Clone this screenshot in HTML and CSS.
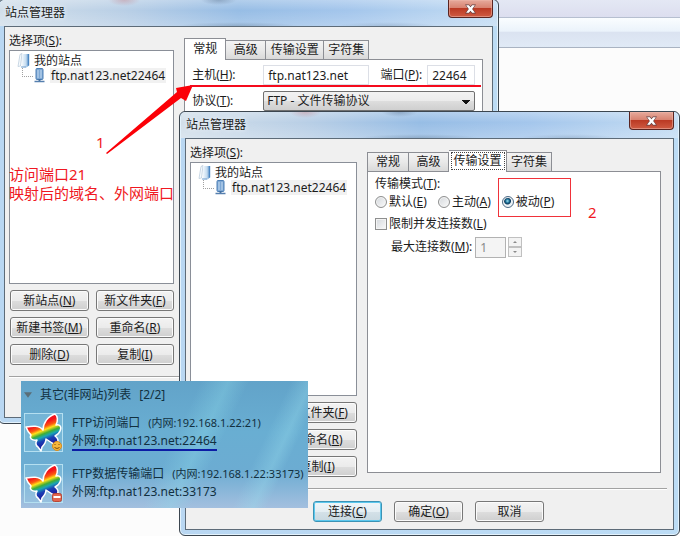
FILE: index.html
```
<!DOCTYPE html>
<html lang="zh-CN">
<head>
<meta charset="utf-8">
<title>站点管理器</title>
<link rel="stylesheet" href="styles.css">
</head>
<body>
<svg class="defs" aria-hidden="true">
  <defs>
    <linearGradient id="rainbow" gradientUnits="userSpaceOnUse" x1="4.4" y1="11.2" x2="14.8" y2="37.2">
      <stop offset="0.15" stop-color="#f3131b"/>
      <stop offset="0.3" stop-color="#fb5a10"/>
      <stop offset="0.4" stop-color="#ffe019"/>
      <stop offset="0.52" stop-color="#3fae35"/>
      <stop offset="0.62" stop-color="#19a5b5"/>
      <stop offset="0.75" stop-color="#1a3fb5"/>
      <stop offset="1" stop-color="#1d1596"/>
    </linearGradient>
    <linearGradient id="steel" x1="0" x2="1" y1="0" y2="0">
      <stop offset="0" stop-color="#f2f8fd"/>
      <stop offset="0.55" stop-color="#c5dcf0"/>
      <stop offset="1" stop-color="#5d93c9"/>
    </linearGradient>
  </defs>
  <symbol id="server" viewBox="0 0 13 15">
    <path d="M3 1.500 5 .5 3.500 13 1 13.500z" fill="#f6fafd" stroke="#a9bfd4" stroke-width=".6"/>
    <path d="M5 1h7v11.500l-2.500 2H5z" fill="url(#steel)"/>
    <path d="M11.500 1v11.500" stroke="#4b86c2" stroke-width="1.400"/>
    <path d="M4 14h5" stroke="#6e9dcd"/>
  </symbol>
  <symbol id="host" viewBox="0 0 11 15">
    <rect x="2" y=".5" width="7" height="11" rx="1" fill="#7fa8d4" stroke="#4d7fb5"/>
    <path d="M4 2v8M7 2v8" stroke="#c6dcf2"/>
    <path d="M5.500 11v2" stroke="#44709f" stroke-width="2"/>
    <path d="M.5 13.500h10" stroke="#557fae" stroke-width="1.500"/>
  </symbol>
  <symbol id="butterfly" viewBox="0 0 39 39">
    <path d="M19 17C19 10 24 3 31 1C34 3 34 8 32 12C36 11 38 14 36 18C35 21 33 22 31 23C34 25 35 28 33 30C32 33 30 31 28 30L22 26C22 30 20 32 18 34L17 38L14 34C12 33 11 30 13 27C8 28 5 25 7 22C4 19 3 17 2 14C8 13 15 12 19 17Z" fill="url(#rainbow)" stroke="#fff" stroke-width="1.500" stroke-linejoin="round"/>
  </symbol>
</svg>

<main class="desktop">
  <div class="backdrop"><div class="strip"></div><div class="toolbar"></div></div>

  <section class="window window-back">
    <header class="titlebar"><h1>站点管理器</h1><button class="close" aria-label="关闭"><svg viewBox="0 0 10 9"><path d="M1 1h2.500L5 3l1.500-2H9L6.500 4.500 9 8H6.500L5 6 3.500 8H1l2.500-3.500z"/></svg></button></header>
    <div class="client">
      <div class="columns">
        <div class="sites">
          <p class="caption">选择项(<u>S</u>):</p>
          <ul class="tree">
            <li><svg class="server"><use href="#server"/></svg>我的站点</li>
            <li class="child"><svg class="host"><use href="#host"/></svg><span class="picked">ftp.nat123.net22464</span></li>
          </ul>
          <div class="actions">
            <button class="btn">新站点(<u>N</u>)</button><button class="btn">新文件夹(<u>F</u>)</button>
            <button class="btn">新建书签(<u>M</u>)</button><button class="btn">重命名(<u>R</u>)</button>
            <button class="btn">删除(<u>D</u>)</button><button class="btn">复制(<u>I</u>)</button>
          </div>
        </div>
        <div class="settings">
          <nav class="tabs"><button class="tab active">常规</button><button class="tab">高级</button><button class="tab wide">传输设置</button><button class="tab mid">字符集</button></nav>
          <div class="panel general">
            <label for="host-name">主机(<u>H</u>):</label>
            <input id="host-name" class="field" type="text" value="ftp.nat123.net">
            <label class="port-label" for="port">端口(<u>P</u>):</label>
            <input id="port" class="field port" type="text" value="22464">
            <label for="protocol">协议(<u>T</u>):</label>
            <select id="protocol" class="protocol"><option>FTP - 文件传输协议</option></select>
          </div>
        </div>
      </div>
      <footer class="footer"></footer>
    </div>
  </section>

  <section class="window window-front">
    <header class="titlebar"><h1>站点管理器</h1><button class="close" aria-label="关闭"><svg viewBox="0 0 10 9"><path d="M1 1h2.500L5 3l1.500-2H9L6.500 4.500 9 8H6.500L5 6 3.500 8H1l2.500-3.500z"/></svg></button></header>
    <div class="client">
      <div class="columns">
        <div class="sites">
          <p class="caption">选择项(<u>S</u>):</p>
          <ul class="tree">
            <li><svg class="server"><use href="#server"/></svg>我的站点</li>
            <li class="child"><svg class="host"><use href="#host"/></svg><span class="picked">ftp.nat123.net22464</span></li>
          </ul>
          <div class="actions second-only">
            <button class="btn">新文件夹(<u>F</u>)</button>
            <button class="btn">重命名(<u>R</u>)</button>
            <button class="btn">复制(<u>I</u>)</button>
          </div>
        </div>
        <div class="settings">
          <nav class="tabs"><button class="tab">常规</button><button class="tab">高级</button><button class="tab wide active focus">传输设置</button><button class="tab mid">字符集</button></nav>
          <div class="panel transfer">
            <p>传输模式(<u>T</u>):</p>
            <div class="modes">
              <label><input type="radio" name="mode"><span>默认(<u>E</u>)</span></label>
              <label><input type="radio" name="mode"><span>主动(<u>A</u>)</span></label>
              <label><input type="radio" name="mode" checked><span>被动(<u>P</u>)</span></label>
            </div>
            <label class="limit"><input type="checkbox"><span>限制并发连接数(<u>L</u>)</span></label>
            <div class="max">
              <label for="max">最大连接数(<u>M</u>):</label>
              <input id="max" type="text" value="1" disabled>
              <span class="spin"><button disabled aria-label="增加"><svg viewBox="0 0 6 4"><path d="M3 1 5 3H1z"/></svg></button><button disabled aria-label="减少"><svg viewBox="0 0 6 4"><path d="M1 1h4L3 3z"/></svg></button></span>
            </div>
          </div>
        </div>
      </div>
      <footer class="footer">
        <button class="btn primary">连接(<u>C</u>)</button><button class="btn">确定(<u>O</u>)</button><button class="btn">取消</button>
      </footer>
    </div>
  </section>

  <section class="mappings">
    <h2><svg class="caret" viewBox="0 0 9 6"><path d="M0 0h9L4.500 6z"/></svg><span>其它(非网站)列表</span><span>[2/2]</span></h2>
    <article class="mapping">
      <svg class="avatar" viewBox="0 0 39 39"><rect x=".5" y=".5" width="38" height="38" fill="#8ec9e3" fill-opacity=".35" stroke="#b4dff0"/><use href="#butterfly"/><circle cx="33" cy="33" r="4.500" fill="#f6b73c" stroke="#d98b1c"/><path d="M31 31v1M35 31v1M30.500 34.500q2.500 2 5 0" stroke="#7b4b0d" fill="none"/></svg>
      <div><p class="local"><span>FTP访问端口</span><small>(内网:192.168.1.22:21)</small></p><p><span class="marked">外网:ftp.nat123.net:22464</span></p></div>
    </article>
    <article class="mapping">
      <svg class="avatar" viewBox="0 0 39 39"><rect x=".5" y=".5" width="38" height="38" fill="#8ec9e3" fill-opacity=".35" stroke="#b4dff0"/><use href="#butterfly"/><rect x="28.500" y="29.500" width="9" height="8" rx="2" fill="#e2644d" stroke="#b74635"/><path d="M29.500 33h7" stroke="#fff" stroke-width="2"/></svg>
      <div><p class="local"><span>FTP数据传输端口</span><small>(内网:192.168.1.22:33173)</small></p><p>外网:ftp.nat123.net:33173</p></div>
    </article>
  </section>

  <svg class="arrow" viewBox="0 0 90 70" aria-hidden="true"><path d="M0 68 71 7 70 3 87 0 80 16 75 13 1 69z"/></svg>
  <div class="rule"></div>
  <span class="note step-one">1</span>
  <p class="note hint">访问端口21<br>映射后的域名、外网端口</p>
  <div class="frame"></div>
  <span class="note step-two">2</span>
</main>
</body>
</html>
```
FILE: styles.css
```
* { box-sizing: border-box; }
body {
  margin: 0;
  font: 12px/16px "Noto Sans", "Noto Sans CJK SC", sans-serif;
  color: #1c1c1c;
  background: #fcfcfc;
}
h1, h2, p, ul { margin: 0; padding: 0; font-weight: normal; }
button, input, select { font: inherit; color: inherit; margin: 0; }
u { text-underline-offset: 1px; }
.defs { position: absolute; width: 0; height: 0; }
.desktop { position: relative; min-height: 100vh; overflow: hidden; }

/* Application behind the dialogs */
.strip { height: 18px; background: linear-gradient(#e4e8f4, #dcdeef); border-bottom: 1px solid #b6bfd0; }
.toolbar {
  height: 30px;
  background: linear-gradient(#fafdff, #ebf3fb 45%, #dbe3f1 50%, #e0eaf6);
  border-bottom: 1px solid #a9b3c2;
}

/* Glass windows */
.window {
  position: absolute;
  width: 501px;
  padding: 0 5px 5px;
  border: 1px solid #3c4650;
  border-radius: 6px;
  background: linear-gradient(90deg, #b9d7f2, #bcdcf5);
  box-shadow: inset 0 0 0 1px #e3f2fc;
}
.window-back { left: -2px; top: -1px; }
.window-front { left: 179px; top: 111px; }
.titlebar {
  display: flex;
  justify-content: space-between;
  height: 26px;
  margin: 0 -4px;
  padding: 0 4px 0 5px;
  border-radius: 5px 5px 0 0;
  background:
    radial-gradient(60px 4px at 48% 100%, #7d98b599, transparent),
    radial-gradient(50px 4px at 78% 100%, #7d98b566, transparent),
    radial-gradient(16px 6px at 25% 0, #c49aa599, transparent),
    radial-gradient(18px 5px at 44% 0, #6b85a388, transparent),
    linear-gradient(#ffffff44, transparent 40%, #ffffff33),
    linear-gradient(90deg, #d2dfea, #b9cfe6 25%, #97bde5 48%, #a4c6ec 70%, #c3dcf3);
}
.titlebar h1 { font-size: 12px; line-height: 26px; text-shadow: 0 0 5px #fff; }
.close {
  display: grid;
  place-items: center;
  width: 45px;
  height: 18px;
  padding: 0;
  border: 1px solid #5a2420;
  border-top: 0;
  border-radius: 0 0 4px 4px;
  background: linear-gradient(#e6aa9c, #d88371 45%, #bb3a24 50%, #cf5b42);
  box-shadow: inset 0 0 0 1px #efb8aa88;
}
.close svg { width: 11px; height: 10px; fill: #fff; stroke: #5c4044; stroke-width: 1px; paint-order: stroke; }
.client { border: 1px solid #5d6b78; background: #f0f0f0; }
.columns { display: flex; gap: 10px; padding: 5px 12px 11px 4px; }

/* Site list */
.sites { width: 167px; }
.caption { line-height: 18px; }
.tree {
  height: 234px;
  padding: 2px 7px;
  list-style: none;
  background: #fff;
  border: 1px solid #8a8f98;
}
.tree li { display: flex; align-items: center; gap: 4px; height: 15px; }
.tree .child { gap: 5px; margin-left: 5px; padding-left: 12px; position: relative; }
.tree .child::before {
  content: "";
  position: absolute;
  left: 0;
  top: 0;
  width: 10px;
  height: 8px;
  border: 1px dotted #a0a0a0;
  border-width: 0 0 1px 1px;
}
.server { width: 13px; height: 15px; }
.host { width: 11px; height: 15px; flex: none; }
.picked { background: #f1f1f1; padding: 0 1px; line-height: 15px; }
.actions { display: grid; grid-template-columns: 1fr 1fr; gap: 6px 7px; padding: 6px 0 0 1px; }
.second-only .btn { grid-column: 2; }
.btn {
  height: 21px;
  padding: 0;
  line-height: 18px;
  white-space: nowrap;
  border: 1px solid #777;
  border-radius: 3px;
  background: linear-gradient(#f3f3f3, #ebebeb 50%, #dddddd 52%, #cfcfcf);
  box-shadow: inset 0 0 0 1px #fbfbfb;
}

/* Tabbed settings */
.settings { flex: 1; display: flex; flex-direction: column; padding: 5px 0 4px; }
.tabs { display: flex; align-items: flex-end; height: 22px; }
.tab {
  width: 40px;
  height: 19px;
  padding: 0;
  line-height: 16px;
  white-space: nowrap;
  border: 1px solid #8c8e94;
  border-bottom: 0;
  border-left-width: 0;
  background: linear-gradient(#f3f3f3, #e9e9e9 50%, #d9d9d9);
}
.tab:first-child { border-left-width: 1px; width: 42px; }
.tab.wide { width: 58px; }
.tab.mid { width: 45px; }
.tab.active { position: relative; height: 22px; margin-bottom: -1px; padding-bottom: 2px; background: #fff; }
.tab.focus { outline: 1px dotted #444; outline-offset: -3px; }
.panel { flex: 1; border: 1px solid #8c8e94; background: #fff; }
.general {
  display: grid;
  grid-template-columns: 71px 106px 53px 5px 48px;
  grid-auto-rows: 20px;
  row-gap: 6px;
  align-content: start;
  align-items: center;
  padding: 5px 7px;
}
.port-label { text-align: right; }
.field { width: 100%; height: 20px; padding: 0 4px; border: 1px solid #dcdfe6; background: #fff; }
.port { grid-column: 5; }
.protocol {
  grid-column: 2 / 6;
  width: 100%;
  height: 20px;
  padding: 0 3px;
  appearance: none;
  border: 1px solid #707070;
  border-radius: 2px;
  background:
    linear-gradient(225deg, #111 50%, transparent 51%) right 8px top 8px / 4px 4px no-repeat,
    linear-gradient(135deg, #111 50%, transparent 51%) right 4px top 8px / 4px 4px no-repeat,
    linear-gradient(#f2f2f2, #ebebeb 50%, #dddddd 52%, #cfcfcf);
}
.transfer { padding: 4px 7px; }
.modes, .modes label, .limit, .max { display: flex; align-items: center; }
.modes { gap: 11px; height: 20px; }
.modes label, .limit { gap: 2px; }
input[type="radio"], input[type="checkbox"] {
  appearance: none;
  width: 12px;
  height: 12px;
  border: 1px solid #8e8f8f;
  background: linear-gradient(135deg, #d4d8dc, #fafafa);
  box-shadow: inset 0 0 0 1px #f4f4f4;
}
input[type="radio"] { border-radius: 50%; }
input[type="radio"]:checked { border-color: #4c6a86; background: radial-gradient(circle at 45% 40%, #9fe4f5 0, #17688f 2px, #0d3a5c 3px, #e8f0f6 4px); }
.limit { height: 24px; }
.max { height: 22px; padding-left: 16px; }
.max input { width: 31px; height: 21px; margin-left: 3px; padding: 0 4px; border: 1px solid #b2b2b2; background: #f4f4f4; color: #888; }
.spin { display: grid; margin-left: 2px; }
.spin button { display: grid; place-items: center; width: 14px; height: 10px; padding: 0; border: 1px solid #c0c0c0; background: #f3f3f3; }
.spin svg { width: 6px; height: 4px; fill: #8a8a8a; }

.footer {
  display: flex;
  justify-content: center;
  gap: 12px;
  height: 41px;
  margin: 0 6px 0 4px;
  padding-top: 12px;
  border-top: 1px solid #a2a2a2;
  box-shadow: inset 0 1px #fff;
}
.footer .btn { width: 69px; }
.primary { border-color: #3c93b5; box-shadow: inset 0 0 0 1px #5cc8ee; background: linear-gradient(#f0f6f9, #e4eef3 50%, #d4e1e8 52%, #c8d8e0); }

/* Port mapping list */
.mappings {
  position: absolute;
  left: 21px;
  top: 381px;
  width: 287px;
  padding: 5px 3px 5px;
  color: #12303f;
  background:
    linear-gradient(115deg, transparent 52%, #8fdcea55 60%, transparent 66%, transparent 78%, #9adfee55 84%, transparent 88%),
    linear-gradient(#62a3c9, #69aed2 40%, #6cacd2 70%, #a3bfdf);
}
.mappings h2 { display: flex; align-items: center; gap: 8px; height: 18px; margin-bottom: 9px; font-size: 12px; }
.caret { width: 8px; height: 6px; fill: #5a6e78; }
.mapping { display: flex; gap: 9px; height: 39px; line-height: 18px; white-space: nowrap; }
.mapping + .mapping { margin-top: 12px; }
.avatar { width: 39px; height: 39px; flex: none; }
.mapping > div { padding-top: 1px; }
.local { display: flex; gap: 8px; }
.local small { font-size: 11px; }
.marked { position: relative; }
.marked::after { content: ""; position: absolute; left: 0; right: 0; bottom: -2px; height: 2px; background: #0b1ca5; }

/* Hand-drawn annotations */
.arrow { position: absolute; left: 106px; top: 85px; width: 90px; height: 70px; fill: #fb0007; }
.rule { position: absolute; left: 190px; top: 85px; width: 291px; height: 2px; background: #f50a1c; }
.note { position: absolute; color: #f01822; font-size: 15px; line-height: 19px; white-space: nowrap; }
.step-one { left: 96px; top: 133px; }
.hint { left: 9px; top: 165px; }
.step-two { left: 588px; top: 203px; }
.frame { position: absolute; left: 498px; top: 178px; width: 73px; height: 39px; border: 1px solid #f0323a; }
```
